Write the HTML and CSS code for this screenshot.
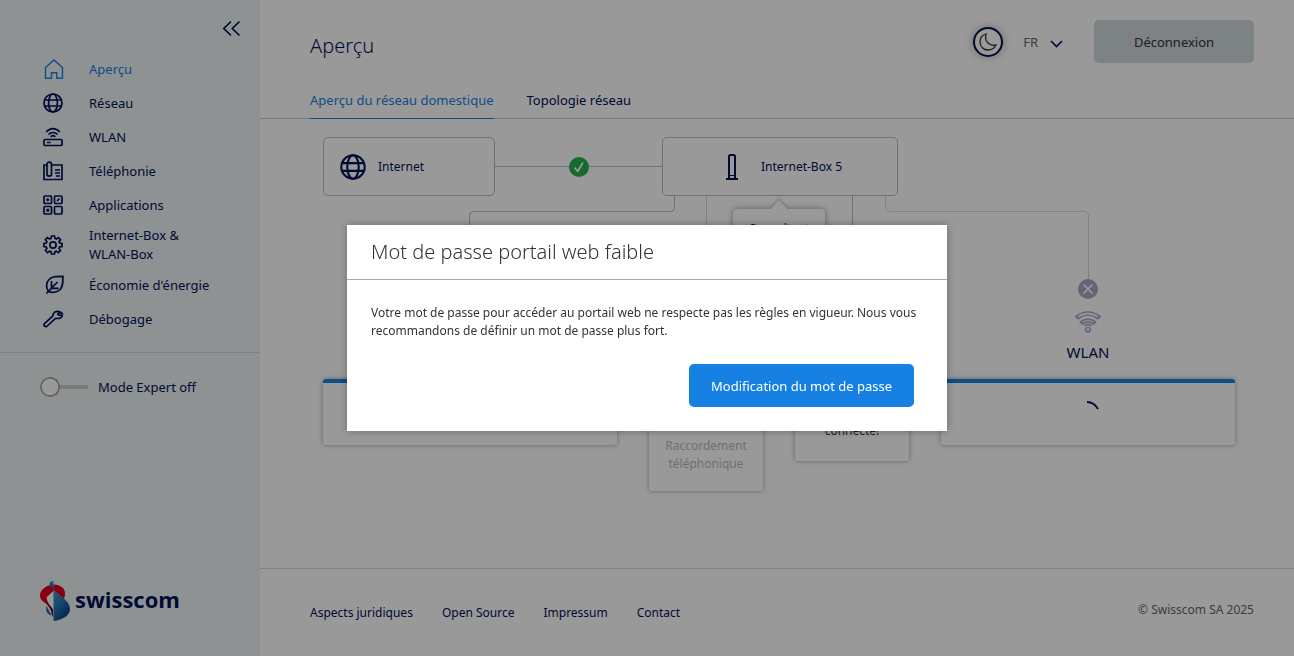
FILE: index.html
```html
<!DOCTYPE html>
<html lang="fr">
<head>
<meta charset="utf-8">
<meta name="viewport" content="width=device-width, initial-scale=1">
<title>Aperçu – Internet-Box</title>
<link rel="stylesheet" href="styles.css">
</head>
<body>
<svg class="sprite" width="0" height="0" aria-hidden="true">
  <symbol id="globe" viewBox="0 0 20 20">
    <circle cx="10" cy="10" r="9"/><ellipse cx="10" cy="10" rx="4.4" ry="9"/><path d="M1.5 7h17M1.5 13h17"/>
  </symbol>
</svg>
<div class="app">
  <aside class="sidebar">
    <button class="collapse" type="button" aria-label="Réduire le menu">
      <svg width="20" height="18" viewBox="0 0 20 18"><path d="M10 1.500L2.800 8.500l7.200 7M18.500 1.500l-7.200 7 7.200 7"/></svg>
    </button>
    <nav class="menu" aria-label="Menu principal">
      <a class="menu-item active" href="#">
        <svg class="icon" viewBox="0 0 20 20"><path d="M2.500 19.200V8.500L11 1l8.500 7.500v10.700h-5.700v-5.500H8.500v5.500z"/></svg>
        <span>Aperçu</span></a>
      <a class="menu-item" href="#"><svg class="icon" viewBox="0 0 20 20"><use href="#globe"/></svg><span>Réseau</span></a>
      <a class="menu-item" href="#">
        <svg class="icon" viewBox="0 0 20 20"><rect x="1" y="12.500" width="18" height="6" rx="1"/><path d="M4 15.500h3.500M3.200 5c4-4.400 9.600-4.400 13.600 0M5.500 7.500c2.600-2.700 6.400-2.700 9 0M7.700 9.800c1.400-1.300 3.200-1.300 4.600 0"/></svg>
        <span>WLAN</span></a>
      <a class="menu-item" href="#">
        <svg class="icon" viewBox="0 0 20 20"><path d="M4 4H1v14.500h18V4H8.600"/><rect x="4" y="1.200" width="4.500" height="14" rx="2.200"/><path d="M12 9h5M12 12h5M13 15h4"/></svg>
        <span>Téléphonie</span></a>
      <a class="menu-item" href="#">
        <svg class="icon" viewBox="0 0 20 20"><rect x="1" y="1" width="7.500" height="7.500" rx="1"/><rect x="11.500" y="1" width="7.500" height="7.500" rx="1"/><rect x="1" y="11.500" width="7.500" height="7.500" rx="1"/><rect x="11.500" y="11.500" width="7.500" height="7.500" rx="1"/><path d="M4.750 3.200v3M3.200 4.750h3M14 6l2.500-2.500M3.600 14.100l2.400 2.400M6 14.100l-2.400 2.400"/></svg>
        <span>Applications</span></a>
      <a class="menu-item" href="#">
        <svg class="icon" viewBox="0 0 20 20"><circle cx="10" cy="10" r="3.100"/><path d="M8.500 1h3l.5 2.400 1.400.6 2.100-1.400 2.100 2.100L16 6.700l.6 1.400 2.400.4v3l-2.400.5-.6 1.400 1.500 2.100-2.100 2.100-2.100-1.500-1.400.6-.4 2.300h-3l-.5-2.300-1.400-.6-2.100 1.500-2.100-2.100L3.900 13.400 3.300 12 1 11.500v-3l2.300-.4.6-1.400-1.500-2L4.500 2.600 6.600 4 8 3.400z"/></svg>
        <span>Internet-Box &amp; WLAN-Box</span></a>
      <a class="menu-item" href="#">
        <svg class="icon" viewBox="0 0 20 20"><path d="M3.400 18.500L14.500 7M8.500 6v7.300h7M5.300 16.200C2.800 12.500 3 7.500 6 4.500 9 1.400 13 1.300 19.900 1.300c0 6 .2 10.200-2.800 13.200s-8 3.700-11.800 1.700z"/></svg>
        <span>Économie d'énergie</span></a>
      <a class="menu-item" href="#">
        <svg class="icon" viewBox="0 0 20 20"><path d="M18.600 3.800c-2.600-2.200-6.600-1.800-8 .6-.6 1-.4 2-1 2.700L1.500 14.500c-.9.900-.6 1.900.1 2.600.8.800 1.900.7 2.700-.1l7.900-7.300c.6-.6 1.400-.3 2.200-.2 2.500.2 4.800-1.100 4.900-3.300h-3.500l-1-1.200 1-1.200z"/></svg>
        <span>Débogage</span></a>
    </nav>
    <label class="expert">
      <input class="switch" type="checkbox" role="switch">
      <span>Mode Expert off</span>
    </label>
    <a class="logo" href="#">
      <svg width="30" height="40" viewBox="0 0 30 40" aria-hidden="true">
        <defs>
          <linearGradient id="wing" x1="0" y1="0" x2=".6" y2="1"><stop offset="0" stop-color="#3d9bd0"/><stop offset=".5" stop-color="#2478b4"/><stop offset="1" stop-color="#0a3a86"/></linearGradient>
          <linearGradient id="tip" x1="0" y1="0" x2="0" y2="1"><stop offset="0" stop-color="#3d9bc4"/><stop offset="1" stop-color="#0d4f96"/></linearGradient>
        </defs>
        <path fill="#e3001b" d="M13.500 3.500C6 4 0 9 0 14.500c0 5 4 6 7 9 2 2 4 6 6 9V25L8 20c-2-2.500-2-4 1-6l4.500-4z"/>
        <path fill="#e3001b" d="M13.500 3.500C21 3.500 25 8 25 12c0 3-.5 5-1.500 6.500L13.500 9z"/>
        <path fill="#fff" d="M13.500 10v22C12 27 9 24 7.500 20.500 7 18 7.500 16 9.500 14z"/>
        <path fill="#5c0612" d="M6 19.500c1 3 5 5 7 9V36c-2-3-1-7-4-10.500-1.500-2-3-4-3-6z"/>
        <path fill="url(#tip)" d="M13.500 9C11.500 6 9.500 5 9.500 3s1.500-3 4-3z"/>
        <path fill="url(#tip)" d="M7 25c1.500 4 3 6 4.500 9.500C8 33.500 6 31 6 28.500c0-1.500.4-2.500 1-3.500z"/>
        <path fill="url(#wing)" d="M13.500 9C19 14 30 20 30 28c0 6-7 11-16.500 12z"/>
      </svg>
      <span>swisscom</span>
    </a>
  </aside>

  <div class="page">
    <header class="header">
      <h1>Aperçu</h1>
      <div class="tools">
        <button class="theme" type="button" aria-label="Mode sombre">
          <svg width="18" height="18" viewBox="0 0 18 18"><path d="M7 1C3.500 2 1 5 1 9c0 4.500 3.500 8 8 8 3.500 0 6.500-2 7.800-5C11 13.500 5 9 7 1z"/></svg>
        </button>
        <button class="lang" type="button">FR
          <svg width="13" height="13" viewBox="0 0 13 13"><path d="M1 6l5.500 5.500L12 6"/></svg>
        </button>
        <button class="logout" type="button">Déconnexion</button>
      </div>
    </header>
    <nav class="tabs" aria-label="Vues">
      <a class="tab active" href="#">Aperçu du réseau domestique</a>
      <a class="tab" href="#">Topologie réseau</a>
    </nav>

    <main class="network">
      <div class="uplink">
        <a class="node node-internet" href="#"><svg width="26" height="26" viewBox="0 0 20 20"><use href="#globe"/></svg>Internet</a>
        <div class="link">
          <svg width="20" height="20" viewBox="0 0 20 20"><circle class="ok" cx="10" cy="10" r="10"/><path class="mark" d="M5.500 10.500l3.200 3.700L14 5.500"/></svg>
        </div>
        <a class="node node-box" href="#">
          <svg width="12" height="28" viewBox="0 0 12 28"><path d="M3 26V3.500Q3 2 4.500 2h3Q9 2 9 3.500V26M0 26h12"/><path class="thin" d="M4 22.500h4"/></svg>Internet-Box 5</a>
        <div class="popover">Consultant</div>
      </div>
      <div class="branches">
        <i class="wire wire-left"></i><i class="wire wire-phone"></i><i class="wire wire-tv"></i><i class="wire wire-wlan"></i><i class="wire wire-drop"></i>
        <section class="card card-wide card-lan"></section>
        <section class="card card-phone">Raccordement téléphonique</section>
        <section class="card card-tv">Pas connecté!</section>
        <section class="wlan">
          <div class="wlan-head">
            <svg width="20" height="20" viewBox="0 0 20 20"><circle class="off" cx="10" cy="10" r="10"/><path class="mark" d="M5.500 5.500l9 9M14.500 5.500l-9 9"/></svg>
            <svg class="wifi" width="26" height="22" viewBox="0 0 26 22"><circle cx="13" cy="18.700" r="2.200"/><path d="M1 5.500C8-.5 18-.5 25 5.500l-2.300 2.100c-6-4.500-13.400-4.500-19.400 0zM5.500 11c4.500-3.800 10.500-3.800 15 0l-2.200 2c-3.400-2.600-7.200-2.600-10.600 0zM9.500 14.800c2.300-1.500 4.700-1.500 7 0"/></svg>
            <h2>WLAN</h2>
          </div>
          <div class="card card-wide"><svg class="spinner" width="24" height="24" viewBox="0 0 24 24"><path d="M11 3q7 0 11 7"/></svg></div>
        </section>
      </div>
    </main>

    <footer class="footer">
      <nav class="legal" aria-label="Liens"><a href="#">Aspects juridiques</a><a href="#">Open Source</a><a href="#">Impressum</a><a href="#">Contact</a></nav>
      <span>© Swisscom SA 2025</span>
    </footer>
  </div>
</div>

<div class="overlay">
  <div class="modal" role="dialog" aria-modal="true" aria-labelledby="modal-title">
    <h2 id="modal-title">Mot de passe portail web faible</h2>
    <div class="modal-body">
      <p>Votre mot de passe pour accéder au portail web ne respecte pas les règles en vigueur. Nous vous recommandons de définir un mot de passe plus fort.</p>
      <button class="primary" type="button">Modification du mot de passe</button>
    </div>
  </div>
</div>
</body>
</html>
```
FILE: styles.css
```css
:root {
  --navy: #001155;
  --blue: #1781e3;
  --text: #333333;
  --line: #d1d9de;
}
* { box-sizing: border-box; }
body {
  margin: 0;
  font: 13px/18px "Noto Sans", "Open Sans", sans-serif;
  color: var(--text);
  background: #fff;
}
a { color: var(--navy); text-decoration: none; }
button { font: inherit; border: 0; cursor: pointer; }
h1, h2, p { margin: 0; font-weight: 400; }
svg { fill: none; stroke: currentColor; stroke-width: 2; flex: none; }
.sprite { position: absolute; }

.app { display: flex; min-height: 100vh; }

/* Sidebar */
.sidebar {
  flex: none;
  width: 260px;
  display: flex;
  flex-direction: column;
  background: #eef3f6;
  color: var(--navy);
}
.collapse {
  align-self: flex-end;
  margin: 20px 19px 0;
  padding: 0;
  height: 18px;
  background: none;
  color: var(--navy);
}
.collapse svg { display: block; stroke-width: 1.700; }
.menu {
  display: flex;
  flex-direction: column;
  padding: 14px 40px 16px 43px;
  border-bottom: 1px solid var(--line);
}
.menu-item {
  display: flex;
  align-items: center;
  gap: 26px;
  min-height: 34px;
  line-height: 19px;
}
.menu-item.active { color: var(--blue); }
.icon { width: 20px; height: 20px; stroke-width: 1.700; overflow: visible; }
.menu-item.active .icon { stroke-width: 1.400; }
.menu-item:nth-child(6) { padding: 4px 0; }
.expert {
  display: flex;
  align-items: center;
  gap: 10px;
  padding: 24px 40px;
}
.switch {
  appearance: none;
  margin: 0;
  width: 48px;
  height: 20px;
  border-radius: 10px;
  background:
    radial-gradient(circle at 10px 10px, #fff 8px, #aaa 8px, #aaa 10px, transparent 10px),
    linear-gradient(#ccc, #ccc) 18px 8px / 30px 4px no-repeat;
}
.logo {
  display: flex;
  align-items: flex-start;
  gap: 5px;
  margin: auto 40px 35px;
  font: 700 22px/36px "Open Sans", sans-serif;
}
.logo svg { stroke: none; }

/* Page */
.page { flex: 1; min-width: 0; display: flex; flex-direction: column; }
.header {
  display: flex;
  justify-content: space-between;
  align-items: flex-start;
  padding: 20px 40px 0 50px;
}
.header h1 { font-size: 20px; line-height: 52px; font-weight: 300; color: var(--navy); }
.tools { display: flex; align-items: center; }
.theme {
  display: grid;
  place-items: center;
  width: 30px;
  height: 30px;
  padding: 0;
  border: 2px solid var(--navy);
  border-radius: 50%;
  background: #fff;
  color: var(--text);
  box-shadow: 0 0 8px rgba(0, 0, 0, .3);
}
.theme svg { stroke-width: 1.300; }
.lang {
  display: flex;
  align-items: center;
  gap: 12px;
  padding: 0 20px;
  margin-right: 11px;
  background: none;
  color: #666;
}
.lang svg { color: var(--navy); stroke-width: 1.600; }
.logout, .primary { height: 43px; border-radius: 5px; }
.logout { width: 160px; background: var(--line); color: var(--text); }
.tabs {
  display: flex;
  gap: 33px;
  padding: 10px 50px 0;
  border-bottom: 1px solid #ccc;
}
.tab { padding: 9px 0; margin-bottom: -1px; border-bottom: 1px solid transparent; }
.tab.active { color: var(--blue); border-color: var(--blue); }

/* Network diagram */
.network { flex: 1; padding: 18px 59px 0 63px; }
.uplink {
  display: grid;
  grid-template-columns: 172fr 167fr 236fr 337fr;
  position: relative;
}
.node {
  display: flex;
  align-items: center;
  height: 59px;
  border: 1px solid #bbb;
  border-radius: 5px;
  font-size: 12px;
}
.node-internet { padding-left: 16px; gap: 12px; }
.node-internet svg { stroke-width: 1.600; }
.node-box { justify-content: center; gap: 23px; padding-left: 8px; }
.thin { stroke-width: 1; }
.link {
  display: grid;
  place-items: center;
  background: linear-gradient(#bbb, #bbb) 0 29px / 100% 1px no-repeat;
}
.link svg, .wlan-head svg { display: block; }
.ok { fill: #25b252; stroke: none; }
.off { fill: #a7aac9; stroke: none; }
.mark { stroke: #fff; stroke-width: 1.700; }
.popover {
  position: absolute;
  left: 45%;
  top: 72px;
  width: 10%;
  padding: 11px 0;
  text-align: center;
  font-size: 12px;
  color: var(--navy);
  background: #fff;
  border-radius: 4px;
  box-shadow: 0 0 6px rgba(0, 0, 0, .4);
}
.popover::before {
  content: "";
  position: absolute;
  left: calc(50% - 6px);
  top: -6px;
  width: 12px;
  height: 12px;
  background: #fff;
  transform: rotate(45deg);
  box-shadow: -2px -2px 3px rgba(0, 0, 0, .15);
}
.branches {
  position: relative;
  display: grid;
  grid-template-columns: 294fr 114fr 114fr 294fr;
  column-gap: 32px;
  align-items: start;
  z-index: -1;
}
.card {
  padding: 16px;
  text-align: center;
  font-size: 12px;
  background: #fff;
  border-radius: 3px;
  box-shadow: 0 0 5px rgba(0, 0, 0, .35);
}
.card-wide { height: 66px; border-top: 4px solid var(--blue); }
.card-lan { margin-top: 183px; }
.card-phone { margin-top: 183px; padding-top: 58px; padding-bottom: 18px; color: #bbb; }
.card-tv { margin-top: 183px; padding: 25px 24px 21px; }
.wlan-head {
  display: flex;
  flex-direction: column;
  align-items: center;
  height: 183px;
  padding-top: 83px;
  color: #a7aac9;
}
.wifi { margin-top: 12px; stroke-width: 1.700; overflow: visible; }
.wlan-head h2 { margin-top: 9px; font-size: 15px; line-height: 20px; color: var(--navy); }
.spinner { display: block; margin: 0 auto; color: var(--navy); }
.wire { position: absolute; border: 0 solid #bbb; }
.wire-left { left: 16%; top: 15px; width: 22%; height: 168px; border-width: 1px 0 0 1px; border-top-left-radius: 5px; }
.wire-left::after {
  content: "";
  position: absolute;
  right: -5px;
  bottom: 167px;
  width: 6px;
  height: 16px;
  border: solid #bbb;
  border-width: 0 1px 1px 0;
  border-bottom-right-radius: 5px;
}
.wire-phone { left: 42%; top: 0; height: 183px; border-left-width: 1px; border-color: var(--line); }
.wire-tv { left: 58%; top: 0; height: 183px; border-left-width: 1px; }
.wire-wlan { left: calc(62% - 3px); top: 0; width: 12%; height: 16px; border-width: 0 0 1px 1px; border-color: var(--line); border-bottom-left-radius: 5px; }
.wire-drop { left: 73%; top: 15px; width: 11%; height: 68px; border-width: 1px 1px 0 0; border-color: var(--line); border-top-right-radius: 5px; }

/* Footer */
.footer {
  display: flex;
  justify-content: space-between;
  padding: 32px 40px 34px 50px;
  border-top: 1px solid var(--line);
  font-size: 12px;
  color: #666;
}
.legal { display: flex; gap: 29px; padding-top: 3px; }

/* Dialog */
.overlay {
  position: fixed;
  inset: 0;
  display: grid;
  place-items: center;
  background: rgba(0, 0, 0, .4);
}
.modal {
  width: 600px;
  max-width: 100%;
  background: #fff;
  box-shadow: 0 0 8px rgba(0, 0, 0, .3);
}
.modal h2 {
  padding: 10px 24px;
  font-size: 20px;
  line-height: 34px;
  font-weight: 300;
  border-bottom: 1px solid #aaa;
}
.modal-body {
  display: flex;
  flex-direction: column;
  align-items: flex-end;
  gap: 24px;
  padding: 24px;
  font-size: 12px;
}
.primary { margin-right: 9px; padding: 0 22px; background: var(--blue); color: #fff; font-size: 13px; }
```
